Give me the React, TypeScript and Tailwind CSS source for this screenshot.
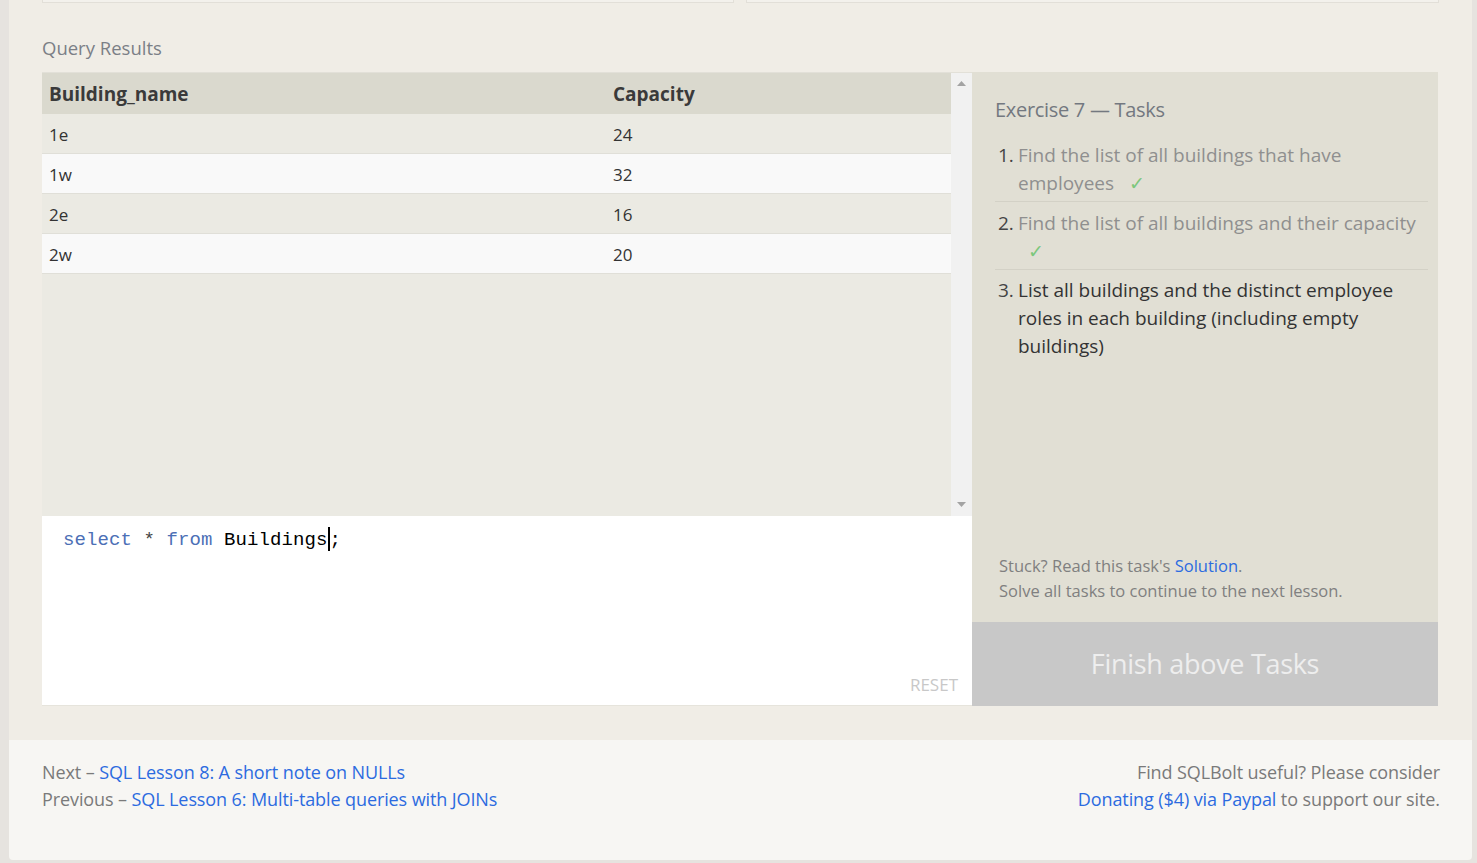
import React from 'react';

const rows = [
  { name: '1e', capacity: 24 },
  { name: '1w', capacity: 32 },
  { name: '2e', capacity: 16 },
  { name: '2w', capacity: 20 },
];

function Check() {
  return (
    <>
      {' '}
      <span className="inline-block leading-none text-[#7cc77c] ml-[10px]">✓</span>
    </>
  );
}

export default function App() {
  return (
    <div className='min-h-screen bg-[#e6e3df] pl-[9px] pr-[5px] pb-[3px] font-[family-name:"Open_Sans",sans-serif]'>
      <div className="bg-[#f0ede6] px-[33px] pb-[34px]">
        {/* tail of the lesson boxes above */}
        <div className="flex gap-[12px] h-[3px]">
          <div className="w-[692px] border-x border-b border-[#e2dfd8] bg-[#f3f1ec]" />
          <div className="flex-1 border-x border-b border-[#e2dfd8] bg-[#f3f1ec]" />
        </div>

        <h3 className="text-[18.5px] text-[#7b7f86] mt-[33px] mb-[12px] leading-[24px]">Query Results</h3>

        <div className="flex">
          <div className="w-[930px] shrink-0 flex flex-col">
            {/* results */}
            <div className="h-[444px] flex bg-[#ebeae3] border-t border-[#e2e0d8]">
              <div className="flex-1">
                <div className="flex h-[41px] items-center pt-[2px] bg-[#dad9ce] text-[19px] font-bold text-[#3a3a3a]">
                  <div className="w-[571px] pl-[7px]">Building_name</div>
                  <div>Capacity</div>
                </div>
                {rows.map((r, i) => (
                  <div
                    key={r.name}
                    className={`flex h-[40px] items-center pt-[2px] text-[17px] text-[#333] border-b border-[#e0dfd8] ${
                      i % 2 === 1 ? 'bg-[#f9f9f9]' : 'bg-[#ebeae3]'
                    }`}
                  >
                    <div className="w-[571px] pl-[7px]">{r.name}</div>
                    <div>{r.capacity}</div>
                  </div>
                ))}
              </div>
              <div className="w-[21px] bg-[#f1f1f1] flex flex-col items-center justify-between py-[8px]">
                <svg width="9" height="6" viewBox="0 0 9 6"><path d="M4.5 0L9 5H0z" fill="#a3a3a3" /></svg>
                <svg width="9" height="6" viewBox="0 0 9 6"><path d="M0 0h9L4.5 5z" fill="#a3a3a3" /></svg>
              </div>
            </div>

            {/* editor */}
            <div className="h-[190px] bg-white flex flex-col justify-between pl-[21px] pr-[14px] pt-[11px] pb-[8px] border-b border-[#e6e4dc]">
              <div className='font-["Liberation_Mono",monospace] text-[19px] leading-[26px] tracking-[0.1px]'>
                <span className="text-[#4c6fb6]">select</span>
                <span className="text-[#444]"> * </span>
                <span className="text-[#4c6fb6]">from</span>
                <span className="text-black"> Buildings</span>
                <span className="inline-block w-[2px] h-[24px] bg-black align-[-6px]" />
                <span className="text-black">;</span>
              </div>
              <div className="self-end text-[17px] text-[#c8c8c8]">RESET</div>
            </div>
          </div>

          {/* tasks */}
          <div className="w-[466px] shrink-0 flex flex-col bg-[#e1dfd4]">
            <div className="flex-1 flex flex-col pl-[23px] pr-[10px] pt-[24px]">
              <h4 className="text-[20px] text-[#737880] leading-[28px] tracking-[-0.3px]">Exercise 7 — Tasks</h4>
              <ol className="mt-[17px] text-[19px] leading-[28px]">
                <li className="flex pb-[4px] border-b border-[#d3d1c6]">
                  <span className="w-[23px] pl-[3px] text-[#444]">1.</span>
                  <span className="flex-1 text-[#8f8f8f]">
                    Find the list of all buildings that have employees
                    <Check />
                  </span>
                </li>
                <li className="flex pt-[7px] pb-[4px] border-b border-[#d3d1c6]">
                  <span className="w-[23px] pl-[3px] text-[#444]">2.</span>
                  <span className="flex-1 text-[#8f8f8f]">
                    Find the list of all buildings and their capacity
                    <Check />
                  </span>
                </li>
                <li className="flex pt-[6px]">
                  <span className="w-[23px] pl-[3px] text-[#444]">3.</span>
                  <span className="flex-1 text-[#333] pr-[20px]">
                    List all buildings and the distinct employee roles in each building (including empty buildings)
                  </span>
                </li>
              </ol>
              <div className="mt-auto pb-[19px] pl-[4px] text-[16.5px] leading-[25px] text-[#808080]">
                <div>
                  Stuck? Read this task's <a className="text-[#2c6be0]">Solution</a>.
                </div>
                <div>Solve all tasks to continue to the next lesson.</div>
              </div>
            </div>
            <div className="h-[84px] bg-[#c8c8c8] flex items-center justify-center text-[27px] text-[#eeeeee] tracking-[-0.3px]">
              Finish above Tasks
            </div>
          </div>
        </div>
      </div>

      <div className="bg-[#f7f6f3] rounded-b-[4px] h-[120px] pl-[33px] pr-[32px] pt-[19px] flex justify-between text-[18px] leading-[27px] text-[#7a7a7a] tracking-[-0.1px]">
        <div>
          <div>
            Next – <a className="text-[#2c6be0]">SQL Lesson 8: A short note on NULLs</a>
          </div>
          <div>
            Previous – <a className="text-[#2c6be0]">SQL Lesson 6: Multi-table queries with JOINs</a>
          </div>
        </div>
        <div className="text-right">
          <div>Find SQLBolt useful? Please consider</div>
          <div>
            <a className="text-[#2c6be0]">Donating ($4) via Paypal</a> to support our site.
          </div>
        </div>
      </div>
    </div>
  );
}
